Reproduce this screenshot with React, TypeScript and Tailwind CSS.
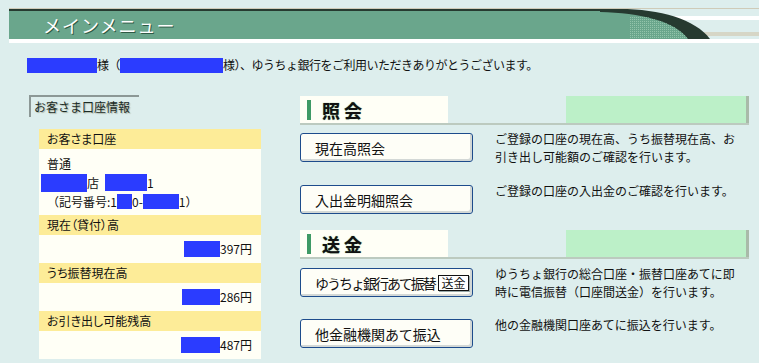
const RED = 'inline-block bg-[#2b3cff] align-middle'

function Redact({ w, h = 15, className = '' }: { w: number; h?: number; className?: string }) {
  return <span className={`${RED} ${className}`} style={{ width: w, height: h }} />
}

function HeaderCurve() {
  return (
    <svg width="159" height="30" viewBox="0 0 159 30" className="block shrink-0">
      <defs>
        <pattern id="dots" width="2" height="2" patternUnits="userSpaceOnUse">
          <rect width="1" height="1" fill="#93c4ab" />
        </pattern>
        <clipPath id="greenClip">
          <path d="M0,3 C40,4 75,12 88,30 L0,30 Z" />
        </clipPath>
      </defs>
      <rect x="0" y="0" width="159" height="30" fill="#ddeeed" />
      <rect x="0" y="7" width="159" height="4" fill="#ffffff" />
      <rect x="0" y="23" width="159" height="4" fill="#d6d6c6" />
      <path d="M0,0 L20,0 C60,0 95,10 110,30 L0,30 Z" fill="#263a30" />
      <path d="M0,3 C40,4 75,12 88,30 L0,30 Z" fill="#6aa68c" />
      <rect x="30" y="8" width="62" height="22" fill="url(#dots)" clipPath="url(#greenClip)" />
    </svg>
  )
}

function SectionHeader({ title }: { title: string }) {
  return (
    <div className="flex h-[29px] w-[449px] border-b-2 border-[#bccabf]">
      <div className="flex w-[148px] items-center bg-[#fffff6]">
        <span className="ml-[7px] h-[20px] w-[4px] bg-[#3f9a66]" />
        <span className="ml-[11px] text-[18px] leading-none font-bold tracking-[4px] text-[#111] [text-shadow:0_0_1px_#4c8a5f]">
          {title}
        </span>
      </div>
      <div className="w-[118px]" />
      <div className="w-[183px] border-r-[3px] border-[#a9baa9] bg-[#bcf0c8]" />
    </div>
  )
}

function MenuButton({ label, badge }: { label: string; badge?: string }) {
  return (
    <button className="flex h-[29px] w-[173px] shrink-0 items-center rounded-[3px] border border-[#1d4c8c] bg-[#fefef7] pl-[14px] text-left text-[14px] leading-none text-[#111] shadow-[inset_-2px_-2px_0_#d3d8d6]">
      <span className={`whitespace-nowrap ${badge ? 'tracking-[-2px]' : ''}`}>{label}</span>
      {badge && (
        <span className="ml-auto mr-[3px] flex h-[16px] w-[31px] items-center justify-center border border-[#111] bg-white text-[12px] leading-none shadow-[1px_1px_0_#9aa]">
          {badge}
        </span>
      )}
    </button>
  )
}

function MenuRow({ label, badge, desc, className = '' }: { label: string; badge?: string; desc: string[]; className?: string }) {
  return (
    <div className={`flex h-[29px] items-start ${className}`}>
      <MenuButton label={label} badge={badge} />
      <div className="-mt-[3px] ml-[22px] w-[254px] text-[12px] leading-[18px]">
        {desc.map((d) => (
          <div key={d}>{d}</div>
        ))}
      </div>
    </div>
  )
}

function YellowRow({ children }: { children: React.ReactNode }) {
  return <div className="h-[20px] bg-[#fdec98] pl-[8px] leading-[20px] [font-feature-settings:'palt']">{children}</div>
}

function Amount({ w, digits }: { w: number; digits: string }) {
  return (
    <div className="flex h-[28px] items-center justify-end bg-[#fffff6] pr-[9px]">
      <Redact w={w} h={16} />
      <span>{digits}円</span>
    </div>
  )
}

export default function App() {
  return (
    <div className="h-[363px] w-[759px] overflow-hidden bg-[#ddeeed] font-['Noto_Sans_CJK_JP',sans-serif] text-[12px] text-[#111]">
      {/* header bar */}
      <div className="pl-[9px] pt-[8px]">
        <div className="border-t border-[#cfcbb8]" />
        <div className="flex h-[30px]">
          <div className="flex flex-1 items-center border-t-2 border-[#263a30] bg-[#6aa68c] pl-[34px]">
            <span className="text-[18px] leading-none tracking-[1px] text-white [text-shadow:1px_1px_0_#2f5a45]">メインメニュー</span>
          </div>
          <HeaderCurve />
        </div>
        <div className="h-[4px] bg-white" />
      </div>

      {/* greeting */}
      <div className="mt-[14px] flex h-[16px] items-center pl-[27px] leading-[16px] tracking-[-0.5px]">
        <Redact w={70} />
        <span>様（</span>
        <Redact w={103} />
        <span>様）、ゆうちょ銀行をご利用いただきありがとうございます。</span>
      </div>

      <div className="flex items-start">
        {/* left column */}
        <div className="ml-[29px] mt-[22px] w-[232px]">
          <div className="h-[22px] w-[110px] border-l-2 border-t-2 border-[#8c9896] pl-[3px] leading-[20px] text-[#1b2b25] [text-shadow:1px_1px_1px_#a9b2a4]">
            お客さま口座情報
          </div>
          <div className="ml-[10px] mt-[12px] w-[222px]">
            <YellowRow>お客さま口座</YellowRow>
            <div className="h-[66px] bg-[#fffff6] pl-[8px] pt-[5px] leading-[19px]">
              <div>普通</div>
              <div className="flex items-center">
                <Redact w={46} h={18} className="-ml-[6px]" />
                <span>店</span>
                <Redact w={42} h={17} className="ml-[6px]" />
                <span>1</span>
              </div>
              <div className="flex items-center">
                <span>（記号番号:1</span>
                <Redact w={15} h={15} />
                <span>0-</span>
                <Redact w={36} h={15} />
                <span>1）</span>
              </div>
            </div>
            <YellowRow>現在（貸付）高</YellowRow>
            <Amount w={36} digits="397" />
            <YellowRow>うち振替現在高</YellowRow>
            <Amount w={38} digits="286" />
            <YellowRow>お引き出し可能残高</YellowRow>
            <Amount w={39} digits="487" />
          </div>
        </div>

        {/* right column */}
        <div className="ml-[39px] mt-[23px]">
          <SectionHeader title="照会" />
          <MenuRow
            className="mt-[8px]"
            label="現在高照会"
            desc={['ご登録の口座の現在高、うち振替現在高、お', '引き出し可能額のご確認を行います。']}
          />
          <MenuRow className="mt-[23px]" label="入出金明細照会" desc={['ご登録の口座の入出金のご確認を行います。']} />
          <div className="mt-[16px]">
            <SectionHeader title="送金" />
          </div>
          <MenuRow
            className="mt-[9px]"
            label="ゆうちょ銀行あて振替"
            badge="送金"
            desc={['ゆうちょ銀行の総合口座・振替口座あてに即', '時に電信振替（口座間送金）を行います。']}
          />
          <MenuRow className="mt-[22px]" label="他金融機関あて振込" desc={['他の金融機関口座あてに振込を行います。']} />
        </div>
      </div>
    </div>
  )
}
